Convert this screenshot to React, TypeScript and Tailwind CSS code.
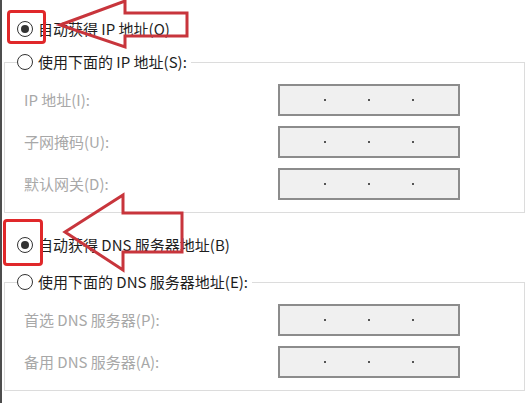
import React from "react";

const font = { fontFamily: '"Noto Sans CJK SC", "Microsoft YaHei", sans-serif' };

function Radio({ checked }: { checked?: boolean }) {
    return (
        <span className="w-4 h-4 rounded-full border-[1.5px] border-[#333] bg-white flex items-center justify-center shrink-0">
            {checked && <span className="w-2 h-2 rounded-full bg-[#333]" />}
        </span>
    );
}

function RadioLabel({ checked, text }: { checked?: boolean; text: string }) {
    return (
        <div className="flex items-center gap-[5px] h-5 leading-5 text-[15px] text-[#1e1e1e]">
            <Radio checked={checked} />
            <span>{text}</span>
        </div>
    );
}

function IpInput() {
    return (
        <div className="w-[182px] h-[32px] border-2 border-[#8c8c8c] bg-[#f0f0f0] flex items-center justify-center gap-[42px]">
            <span className="w-[2px] h-[2px] bg-[#555]" />
            <span className="w-[2px] h-[2px] bg-[#555]" />
            <span className="w-[2px] h-[2px] bg-[#555]" />
        </div>
    );
}

function GroupBox({ legend, rows }: { legend: string; rows: string[] }) {
    return (
        <fieldset className="ml-[2px] w-[521px] border border-[#dcdcdc] pt-[12px] pb-[12px]">
            <legend className="ml-[12px] pr-[4px]">
                <RadioLabel text={legend} />
            </legend>
            <div className="pl-[19px] grid grid-cols-[254px_182px] gap-y-[10px] items-center">
                {rows.map((label) => (
                    <React.Fragment key={label}>
                        <span className="text-[15px] text-[#a8a8a8] leading-5">{label}</span>
                        <IpInput />
                    </React.Fragment>
                ))}
            </div>
        </fieldset>
    );
}

export default function App() {
    return (
        <div className="relative w-[532px] h-[403px] bg-white overflow-hidden" style={font}>
            <div className="h-full border-l-2 border-[#4d4d4d]">
                <div className="pl-[15px] pt-[19px]">
                    <RadioLabel checked text="自动获得 IP 地址(O)" />
                </div>
                <div className="mt-[13px]">
                    <GroupBox
                        legend="使用下面的 IP 地址(S):"
                        rows={["IP 地址(I):", "子网掩码(U):", "默认网关(D):"]}
                    />
                </div>
                <div className="pl-[15px] mt-[22px]">
                    <RadioLabel checked text="自动获得 DNS 服务器地址(B)" />
                </div>
                <div className="mt-[17px]">
                    <GroupBox
                        legend="使用下面的 DNS 服务器地址(E):"
                        rows={["首选 DNS 服务器(P):", "备用 DNS 服务器(A):"]}
                    />
                </div>
            </div>

            {/* highlight boxes */}
            <div className="absolute left-[7px] top-[10px] w-[39px] h-[34px] border-[3px] border-[#e0282a] rounded-[4px]" />
            <div className="absolute left-[3px] top-[219px] w-[40px] h-[47px] border-[3px] border-[#e0282a] rounded-[4px]" />

            {/* arrows */}
            <svg className="absolute left-0 top-0 pointer-events-none" width="532" height="403" viewBox="0 0 532 403">
                <polygon
                    points="60,25 125,1 125,13 187,13 187,36 125,36 125,47"
                    fill="none"
                    stroke="#c8353c"
                    strokeWidth="3"
                    strokeLinejoin="miter"
                />
                <polygon
                    points="65,232 123,195 123,213 182,213 182,252 123,252 123,270"
                    fill="none"
                    stroke="#c8353c"
                    strokeWidth="3"
                    strokeLinejoin="miter"
                />
            </svg>
        </div>
    );
}
